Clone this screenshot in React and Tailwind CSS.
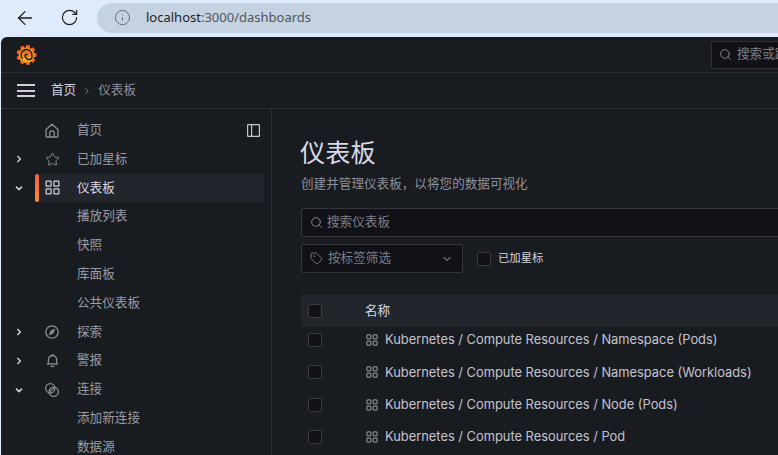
import React from "react";
import { ArrowLeft, RotateCw, Info, Search, Tag, ChevronDown, ChevronRight, Star } from "lucide-react";

const FONT = { fontFamily: '"Inter","Noto Sans CJK SC",sans-serif' };

function GridIcon({ size = 16, sw = 1.3, className = "" }) {
  return (
    <svg width={size} height={size} viewBox="0 0 16 16" fill="none" stroke="currentColor" strokeWidth={sw} className={className}>
      <rect x="1.2" y="1.2" width="5.3" height="5.3" rx="0.4" />
      <rect x="9.5" y="1.2" width="5.3" height="5.3" rx="0.4" />
      <rect x="1.2" y="9.5" width="5.3" height="5.3" rx="0.4" />
      <rect x="9.5" y="9.5" width="5.3" height="5.3" rx="0.4" />
    </svg>
  );
}

function HomeIcon() {
  return (
    <svg width="14" height="15" viewBox="0 0 14 15" fill="none" stroke="currentColor" strokeWidth="1.3">
      <path d="M1 6.4 7 1.2l6 5.2V13a1 1 0 0 1-1 1H2a1 1 0 0 1-1-1z" strokeLinejoin="round" />
      <path d="M4.8 14V10a2.2 2.2 0 0 1 4.4 0v4" />
    </svg>
  );
}

function CompassIcon() {
  return (
    <svg width="14" height="14" viewBox="0 0 14 14" fill="none" stroke="currentColor" strokeWidth="1.3">
      <circle cx="7" cy="7" r="6.2" />
      <path d="M10 4 8.2 8.2 4 10l1.8-4.2z" fill="currentColor" strokeWidth="0.5" strokeLinejoin="round" />
    </svg>
  );
}

function BellIcon() {
  return (
    <svg width="13" height="15" viewBox="0 0 13 15" fill="none" stroke="currentColor" strokeWidth="1.3">
      <path d="M2.4 10.5V6.6a4.1 4.1 0 0 1 8.2 0v3.9" />
      <path d="M.8 11h11.4" />
      <path d="M6.5 1v1.2" />
      <path d="M4.6 13.4h3.8" />
    </svg>
  );
}

function LinkIcon() {
  return (
    <svg width="14" height="14" viewBox="0 0 14 14" fill="none" stroke="currentColor" strokeWidth="1.3">
      <circle cx="5.3" cy="5.3" r="4.6" />
      <circle cx="8.7" cy="8.7" r="4.6" />
      <path d="M5 8.6 8.8 4.9" />
    </svg>
  );
}

function PanelIcon() {
  return (
    <svg width="13" height="13" viewBox="0 0 13 13" fill="none" stroke="currentColor" strokeWidth="1.2" className="mr-[4px] ml-auto text-[#c4c5d0]">
      <rect x="0.6" y="0.6" width="11.8" height="11.8" rx="0.6" />
      <path d="M4.6 .6v11.8" />
    </svg>
  );
}

function Logo() {
  const teeth = [];
  for (let i = 0; i < 9; i++) teeth.push(i * 40 + 10);
  return (
    <svg width="21" height="22" viewBox="0 0 22 22">
      <defs>
        <linearGradient id="gf" x1="0.5" y1="1" x2="0.5" y2="0">
          <stop offset="0" stopColor="#fcc80f" />
          <stop offset="0.45" stopColor="#f78a1e" />
          <stop offset="1" stopColor="#e8422a" />
        </linearGradient>
      </defs>
      <g fill="url(#gf)">
        <circle cx="11" cy="11" r="8.4" />
        {teeth.map((a) => (
          <rect key={a} x="9" y="0.4" width="4" height="6" rx="0.8" transform={`rotate(${a} 11 11)`} />
        ))}
      </g>
      <path d="M6.6 14.6A5.7 5.7 0 1 1 16.6 11.6A3.2 3.2 0 0 1 10.2 13.4A1.5 1.5 0 0 1 11.8 10.6" fill="none" stroke="#181b1f" strokeWidth="1.5" strokeLinecap="round" />
    </svg>
  );
}

function Chevron({ open }) {
  return (
    <svg width="8" height="8" viewBox="0 0 8 8" fill="none" stroke="#c9cad6" strokeWidth="1.6" strokeLinejoin="round">
      {open ? <path d="M1 2.6 4 5.6 7 2.6" /> : <path d="M2.4 1 5.4 4 2.4 7" />}
    </svg>
  );
}

function NavRow({ label, icon, chevron, active, extra }) {
  return (
    <div className="flex h-[28.8px] items-center">
      <div className="flex w-[34px] shrink-0 items-center justify-center pl-[1px]">
        {chevron ? <Chevron open={chevron === "open"} /> : null}
      </div>
      <div className={`flex h-full w-[229px] items-center rounded-[2px] ${active ? "bg-[#22252b]" : ""}`}>
        {active ? <div className="h-full w-[4px] shrink-0 rounded-[2px] bg-gradient-to-b from-[#f55f3e] to-[#ff8833]" /> : <div className="w-[4px] shrink-0" />}
        <div className={`flex w-[26px] shrink-0 items-center justify-center ${active ? "text-[#d0d1de]" : "text-[#8e8f99]"}`}>{icon}</div>
        <span className={`ml-[12px] text-[12.6px] ${active ? "text-[#d8d9e4]" : "text-[#9a9ba6]"}`}>{label}</span>
        {extra}
      </div>
    </div>
  );
}

function Box() {
  return <div className="h-[14px] w-[14px] shrink-0 rounded-[2px] border border-[#3a3c42] bg-[#111217]" />;
}

function Row({ name }) {
  return (
    <div className="flex h-[32.3px] items-center pl-[7px]">
      <Box />
      <div className="ml-[44px] flex items-center text-[#b0b1bc]">
        <GridIcon size={12} sw={1.2} />
        <span className="ml-[7px] whitespace-nowrap text-[12.87px] text-[#c3c4d0]">{name}</span>
      </div>
    </div>
  );
}

export default function App() {
  return (
    <div style={FONT} className="flex h-[455px] w-[778px] flex-col overflow-hidden bg-[#dfeafb]">
      <div className="flex h-[37px] shrink-0 items-center pb-[2px]">
        <div className="flex w-[97px] items-center">
          <ArrowLeft size={22} strokeWidth={1.4} className="ml-[14px] text-[#1f1f1f]" />
          <RotateCw size={19} strokeWidth={1.5} className="ml-[24px] text-[#1f1f1f]" />
        </div>
        <div className="flex h-[30px] flex-1 items-center rounded-l-[15px] bg-[#c5d2e2] pl-[17px] text-[13px]" style={{ fontFamily: '"Noto Sans",sans-serif' }}>
          <Info size={17} strokeWidth={1.3} className="text-[#5f6368]" />
          <span className="ml-[15px] text-[#1f1f1f]">localhost</span>
          <span className="text-[#50565e]">:3000/dashboards</span>
        </div>
      </div>

      <div className="ml-[1px] flex min-h-0 flex-1 flex-col overflow-hidden rounded-tl-[6px] bg-[#181b1f]">
        <div className="flex h-[36px] shrink-0 items-center justify-between border-b border-[#2b2d32] pl-[15px]">
          <Logo />
          <div className="flex h-[28px] w-[80px] shrink-0 translate-x-[13px] items-center overflow-hidden rounded-[2px] border border-[#303237] bg-[#111217] pl-[7px] text-[12.6px] whitespace-nowrap text-[#7e7f8a]">
            <Search size={13} strokeWidth={1.5} className="mr-[5px] shrink-0 text-[#9a9ba6]" />
            搜索或跳转
          </div>
        </div>
        <div className="flex h-[36px] shrink-0 items-center border-b border-[#2b2d32] pl-[16px] text-[12.6px]">
          <div className="flex h-[13px] w-[18px] flex-col justify-between">
            <div className="h-[2px] bg-[#cfd0dc]" />
            <div className="h-[2px] bg-[#cfd0dc]" />
            <div className="h-[2px] bg-[#cfd0dc]" />
          </div>
          <span className="ml-[16px] text-[#d5d6e0]">首页</span>
          <ChevronRight size={10} strokeWidth={2} className="mx-[6px] text-[#8e8f99]" />
          <span className="text-[#8f909b]">仪表板</span>
        </div>

        <div className="flex min-h-0 flex-1">
          <aside className="w-[271px] shrink-0 border-r border-[#2b2d32] pt-[7px]">
            <NavRow label="首页" icon={<HomeIcon />} extra={<PanelIcon />} />
            <NavRow label="已加星标" chevron="closed" icon={<Star size={15} strokeWidth={1.5} />} />
            <NavRow label="仪表板" chevron="open" active icon={<GridIcon size={15} sw={1.3} />} />
            <NavRow label="播放列表" />
            <NavRow label="快照" />
            <NavRow label="库面板" />
            <NavRow label="公共仪表板" />
            <NavRow label="探索" chevron="closed" icon={<CompassIcon />} />
            <NavRow label="警报" chevron="closed" icon={<BellIcon />} />
            <NavRow label="连接" chevron="open" icon={<LinkIcon />} />
            <NavRow label="添加新连接" />
            <NavRow label="数据源" />
          </aside>

          <main className="w-[600px] shrink-0 pl-[29px] pt-[26px]">
            <h1 className="-ml-[1px] text-[25.2px] leading-[36px] text-[#d8d9e4]">仪表板</h1>
            <p className="mt-[3px] text-[12.6px] leading-[20px] text-[#8f909b]">创建并管理仪表板，以将您的数据可视化</p>
            <div className="mt-[14px] flex h-[29px] items-center rounded-[2px] border border-[#33353a] bg-[#111217] pl-[8px] text-[12.6px] text-[#7e7f8a]">
              <Search size={13} strokeWidth={1.5} className="mr-[4px] text-[#9a9ba6]" />
              搜索仪表板
            </div>
            <div className="mt-[7px] flex items-center">
              <div className="flex h-[29px] w-[162px] items-center rounded-[2px] border border-[#33353a] bg-[#111217] pl-[8px] text-[12.6px] text-[#7e7f8a]">
                <Tag size={13} strokeWidth={1.3} className="mr-[5px] text-[#9a9ba6]" />
                按标签筛选
                <ChevronDown size={12} strokeWidth={2} className="mr-[9px] ml-auto text-[#b0b1bc]" />
              </div>
              <div className="ml-[14px]"><Box /></div>
              <span className="ml-[7px] text-[11.34px] text-[#d5d6e0]">已加星标</span>
            </div>
            <div className="mt-[22px] flex h-[32px] items-center bg-[#22252b] pl-[7px]">
              <Box />
              <span className="ml-[43px] text-[12.6px] text-[#d8d9e4]">名称</span>
            </div>
            <div className="-mt-[3px]">
              <Row name="Kubernetes / Compute Resources / Namespace (Pods)" />
              <Row name="Kubernetes / Compute Resources / Namespace (Workloads)" />
              <Row name="Kubernetes / Compute Resources / Node (Pods)" />
              <Row name="Kubernetes / Compute Resources / Pod" />
            </div>
          </main>
        </div>
      </div>
    </div>
  );
}
